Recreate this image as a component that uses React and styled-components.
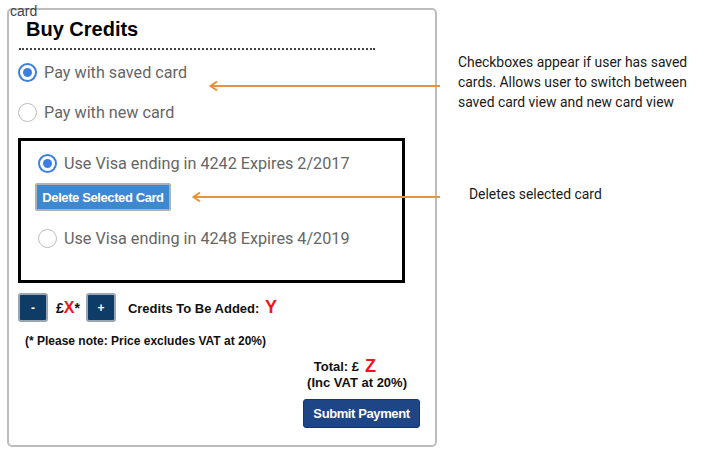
import React from "react"
import styled, { createGlobalStyle } from "styled-components"

const GlobalStyle = createGlobalStyle`
  body {
    margin: 0;
    background: #fff;
    font-family: "Liberation Sans", Arial, sans-serif;
  }
`

const StyledPage = styled.div`
  position: relative;
  width: 712px;
  height: 465px;
  padding: 8px 0 0 7px;
  box-sizing: border-box;
  overflow: hidden;
`

const StyledCard = styled.div`
  width: 430px;
  height: 439px;
  box-sizing: border-box;
  border: 2px solid #bdbdbd;
  border-radius: 5px;
  padding: 7px 15px 0 0;
  display: flex;
  flex-direction: column;
`

const StyledCardLabel = styled.span`
  position: absolute;
  top: 3px;
  left: 10px;
  font-size: 14px;
  line-height: 16px;
  color: #444;
`

const StyledTitle = styled.h2`
  margin: 0 0 7px 17px;
  font-size: 20px;
  line-height: 24px;
  font-weight: bold;
  color: #000;
`

const StyledDots = styled.div`
  margin-left: 10px;
  width: 356px;
  border-top: 2px dotted #444;
`

const StyledRadioRow = styled.label`
  display: flex;
  align-items: center;
  gap: 7px;
  height: 24px;
  margin-top: ${(p) => p.$top}px;
  padding-left: ${(p) => p.$indent}px;
  font-family: Roboto, "Liberation Sans", sans-serif;
  font-size: 16.2px;
  color: #666;
`

const StyledRadio = styled.span`
  width: 19px;
  height: 19px;
  box-sizing: border-box;
  border-radius: 50%;
  border: ${(p) => (p.$checked ? "2px solid #3d7fe0" : "1.5px solid #bcbcbc")};
  background: #fff;
  display: flex;
  align-items: center;
  justify-content: center;

  &::after {
    content: "";
    display: ${(p) => (p.$checked ? "block" : "none")};
    width: 9px;
    height: 9px;
    border-radius: 50%;
    background: #3d7fe0;
  }
`

const StyledSavedBox = styled.div`
  margin: 14px 0 0 9px;
  width: 387px;
  height: 145px;
  box-sizing: border-box;
  border: 3px solid #000;
  padding: 10px 0 0 14px;
  display: flex;
  flex-direction: column;
  align-items: flex-start;
`

const StyledDeleteButton = styled.button`
  margin-top: 8px;
  width: 136px;
  height: 28px;
  box-sizing: border-box;
  border: 2px solid #aab3bc;
  border-radius: 2px;
  background: #3d88d1;
  color: #fff;
  font-family: "Liberation Sans", Arial, sans-serif;
  font-size: 13px;
  font-weight: bold;
  letter-spacing: -0.4px;
  padding: 0;
`

const StyledCreditRow = styled.div`
  display: flex;
  align-items: center;
  margin: 10px 0 0 9px;
  height: 29px;
  font-size: 13px;
  font-weight: bold;
  color: #111;
`

const StyledStepButton = styled.button`
  width: 30px;
  height: 29px;
  box-sizing: border-box;
  border: 2px solid #9aa6b2;
  border-radius: 3px;
  background: #0f3b67;
  color: #fff;
  font-family: "Liberation Sans", Arial, sans-serif;
  font-size: 12px;
  font-weight: bold;
  padding: 0;
`

const StyledPrice = styled.span`
  margin: 0 6px 0 8px;
  font-size: 14px;
`

const StyledCreditsLabel = styled.span`
  margin-left: 12px;
`

const StyledRed = styled.span`
  color: #f2141c;
  font-size: ${(p) => p.$size || 18}px;
  font-weight: bold;
  margin-left: ${(p) => p.$gap || 0}px;
`

const StyledNote = styled.p`
  margin: 11px 0 0 16px;
  font-size: 12px;
  line-height: 16px;
  font-weight: bold;
  color: #111;
`

const StyledTotals = styled.div`
  display: flex;
  flex-direction: column;
  align-items: flex-end;
  margin-top: 9px;
`

const StyledTotalLine = styled.div`
  display: flex;
  align-items: center;
  height: ${(p) => p.$height}px;
  margin-right: ${(p) => p.$right}px;
  font-size: 13px;
  font-weight: bold;
  color: #111;
`

const StyledSubmit = styled.button`
  margin-top: 9px;
  width: 117px;
  height: 29px;
  border: 1px solid #16366b;
  border-radius: 3px;
  background: #1e4586;
  color: #fff;
  font-family: "Liberation Sans", Arial, sans-serif;
  font-size: 13px;
  font-weight: bold;
  letter-spacing: -0.4px;
  padding: 0;
`

const StyledArrow = styled.svg`
  position: absolute;
  left: ${(p) => p.$x}px;
  top: ${(p) => p.$y - 6}px;
  overflow: visible;
`

const StyledNoteText = styled.p`
  position: absolute;
  left: ${(p) => p.$x}px;
  top: ${(p) => p.$y}px;
  margin: 0;
  font-family: Roboto, "Liberation Sans", sans-serif;
  font-size: 13.9px;
  line-height: 20px;
  color: #1a1a1a;
`

const Arrow = ({ x, y, length }) => (
  <StyledArrow $x={x} $y={y} width={length} height="12">
    <line x1="1" y1="6" x2={length} y2="6" stroke="#e8923a" strokeWidth="2" />
    <polyline
      points="8,1.5 1.5,6 8,10.5"
      fill="none"
      stroke="#e8923a"
      strokeWidth="2"
    />
  </StyledArrow>
)

const Radio = ({ checked, label, top, indent }) => (
  <StyledRadioRow $top={top} $indent={indent}>
    <StyledRadio $checked={checked} />
    {label}
  </StyledRadioRow>
)

const App = () => {
  return (
    <StyledPage>
      <GlobalStyle />
      <StyledCard>
        <StyledTitle>Buy Credits</StyledTitle>
        <StyledDots />
        <Radio checked label="Pay with saved card" top={10} indent={9} />
        <Radio label="Pay with new card" top={16} indent={9} />
        <StyledSavedBox>
          <Radio
            checked
            label="Use Visa ending in 4242 Expires 2/2017"
            top={0}
            indent={3}
          />
          <StyledDeleteButton>Delete Selected Card</StyledDeleteButton>
          <Radio
            label="Use Visa ending in 4248 Expires 4/2019"
            top={15}
            indent={3}
          />
        </StyledSavedBox>
        <StyledCreditRow>
          <StyledStepButton>-</StyledStepButton>
          <StyledPrice>
            £<StyledRed $size={16}>X</StyledRed>*
          </StyledPrice>
          <StyledStepButton>+</StyledStepButton>
          <StyledCreditsLabel>
            Credits To Be Added: <StyledRed $gap={2}>Y</StyledRed>
          </StyledCreditsLabel>
        </StyledCreditRow>
        <StyledNote>(* Please note: Price excludes VAT at 20%)</StyledNote>
        <StyledTotals>
          <StyledTotalLine $height={16} $right={44}>
            Total: £ <StyledRed $gap={6}>Z</StyledRed>
          </StyledTotalLine>
          <StyledTotalLine $height={16} $right={13}>
            (Inc VAT at 20%)
          </StyledTotalLine>
          <StyledSubmit>Submit Payment</StyledSubmit>
        </StyledTotals>
      </StyledCard>
      <StyledCardLabel>card</StyledCardLabel>
      <Arrow x={209} y={86} length={231} />
      <Arrow x={192} y={197} length={248} />
      <StyledNoteText $x={458} $y={52}>
        Checkboxes appear if user has saved
        <br />
        cards. Allows user to switch between
        <br />
        saved card view and new card view
      </StyledNoteText>
      <StyledNoteText $x={469} $y={184}>
        Deletes selected card
      </StyledNoteText>
    </StyledPage>
  )
}

export default App
